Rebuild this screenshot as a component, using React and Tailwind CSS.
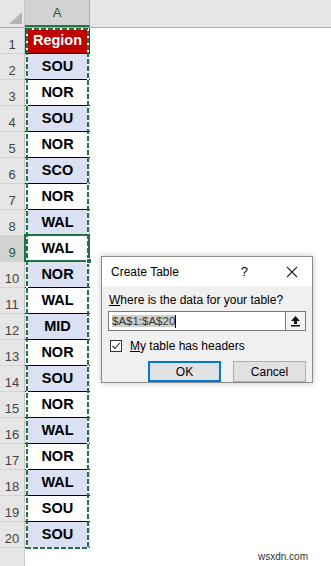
import React from 'react';

const rows = ['Region', 'SOU', 'NOR', 'SOU', 'NOR', 'SCO', 'NOR', 'WAL', 'WAL', 'NOR', 'WAL', 'MID', 'NOR', 'SOU', 'NOR', 'WAL', 'NOR', 'WAL', 'SOU', 'SOU'];

const ui = { fontFamily: '"Liberation Sans", Arial, sans-serif' };

function CreateTableDialog() {
  return (
    <div
      className="absolute left-[101px] top-[256px] w-[212px] h-[127px] border border-[#8c8c8c] bg-[#f0f0f0] flex flex-col shadow-[0_0_6px_rgba(0,0,0,0.25)]"
      style={ui}
    >
      <div className="h-[31px] bg-white flex items-center pl-[9px] pr-[14px] text-[12px] text-black">
        <span>Create Table</span>
        <span className="ml-auto mr-[38px] text-[13px]">?</span>
        <svg width="12" height="12" viewBox="0 0 12 12">
          <path d="M1 1 L11 11 M11 1 L1 11" stroke="#222" strokeWidth="1.1" />
        </svg>
      </div>
      <div className="flex flex-col px-[6px] pt-[7px] text-[12px] text-black">
        <div className="pl-[1px] leading-[15px]">
          <span className="underline">W</span>here is the data for your table?
        </div>
        <div className="flex mt-[3px] h-[20px]">
          <div className="flex-1 border border-[#7a7a7a] bg-white flex items-center pl-[3px]">
            <span className="bg-[#cfcfcf] leading-[12px] text-[11.5px] text-[#333]">$A$1:$A$20</span>
            <span className="w-[1px] h-[13px] bg-black" />
          </div>
          <div className="w-[20px] border border-[#7a7a7a] border-l-0 bg-[#f4f4f4] flex items-center justify-center">
            <svg width="11" height="12" viewBox="0 0 11 12">
              <path d="M5.5 1 L1 6 H4 V9 H7 V6 H10 Z" fill="#111" />
              <rect x="1" y="10" width="9" height="1.5" fill="#111" />
            </svg>
          </div>
        </div>
        <div className="flex items-center mt-[6px] pl-[2px]">
          <div className="w-[12px] h-[12px] border border-[#333] bg-white flex items-center justify-center">
            <svg width="10" height="10" viewBox="0 0 10 10">
              <path d="M1.5 5 L4 7.5 L8.8 2" fill="none" stroke="#222" strokeWidth="1.1" />
            </svg>
          </div>
          <span className="ml-[8px]">
            <span className="underline">M</span>y table has headers
          </span>
        </div>
        <div className="flex justify-end gap-[12px] mt-[6px] pr-[0px]">
          <div className="w-[73px] h-[21px] border-2 border-[#0078d7] bg-[#e1e1e1] flex items-center justify-center">OK</div>
          <div className="w-[73px] h-[21px] border border-[#adadad] bg-[#e1e1e1] flex items-center justify-center">Cancel</div>
        </div>
      </div>
    </div>
  );
}

export default function App() {
  return (
    <div className="relative w-[331px] h-[566px] overflow-hidden bg-white" style={ui}>
      <div className="flex h-[28px] bg-[#e6e6e6] border-b border-[#ababab]">
        <div className="w-[25px] border-r border-[#c6c6c6] flex items-end justify-end pr-[2px] pb-[3px]">
          <svg width="13" height="12" viewBox="0 0 13 12">
            <polygon points="13,0 13,12 0,12" fill="#b4b4b4" />
          </svg>
        </div>
        <div className="w-[65px] bg-[#d2d2d2] border-r border-[#ababab] border-b-2 border-b-[#217346] flex items-center justify-center text-[13px] text-[#1d5c38]">
          A
        </div>
        <div className="flex-1" />
      </div>

      <div className="flex">
        <div className="w-[25px] flex flex-col bg-[#e6e6e6] border-r border-[#c6c6c6] h-[538px]">
          {rows.map((_, i) => (
            <div
              key={i}
              className={
                'h-[26px] shrink-0 border-b border-[#d4d4d4] flex items-end justify-center pb-[1px] leading-[15px] text-[13px] ' +
                (i === 8 ? 'bg-[#d2d2d2] text-[#1d5c38]' : 'text-[#444]')
              }
            >
              {i + 1}
            </div>
          ))}
        </div>

        <div className="relative w-[65px] flex flex-col">
          {rows.map((r, i) => (
            <div
              key={i}
              className={
                'h-[26px] shrink-0 border-b border-black flex items-center justify-center font-bold text-[14.5px] ' +
                (i === 0 ? 'bg-[#c00000] text-white' : i % 2 === 1 ? 'bg-[#d9e1f2] text-black' : 'bg-white text-black')
              }
            >
              {r}
            </div>
          ))}
          <svg className="absolute left-0 top-0" width="65" height="522" viewBox="0 0 65 522">
            <rect x="2" y="1" width="61" height="519" fill="none" stroke="#fff" strokeWidth="2" />
            <rect x="2" y="1" width="61" height="519" fill="none" stroke="#217346" strokeWidth="2" strokeDasharray="5 2" />
          </svg>
          <div className="absolute left-[-1px] top-[206px] w-[66px] h-[28px] border-2 border-[#217346]" />
          <div className="absolute left-[61px] top-[230px] w-[6px] h-[6px] bg-[#217346] border border-white" />
        </div>

        <div className="flex-1" />
      </div>

      <CreateTableDialog />

      <div className="absolute left-[258px] top-[549px] text-[10px] text-[#333]">wsxdn.com</div>
    </div>
  );
}
